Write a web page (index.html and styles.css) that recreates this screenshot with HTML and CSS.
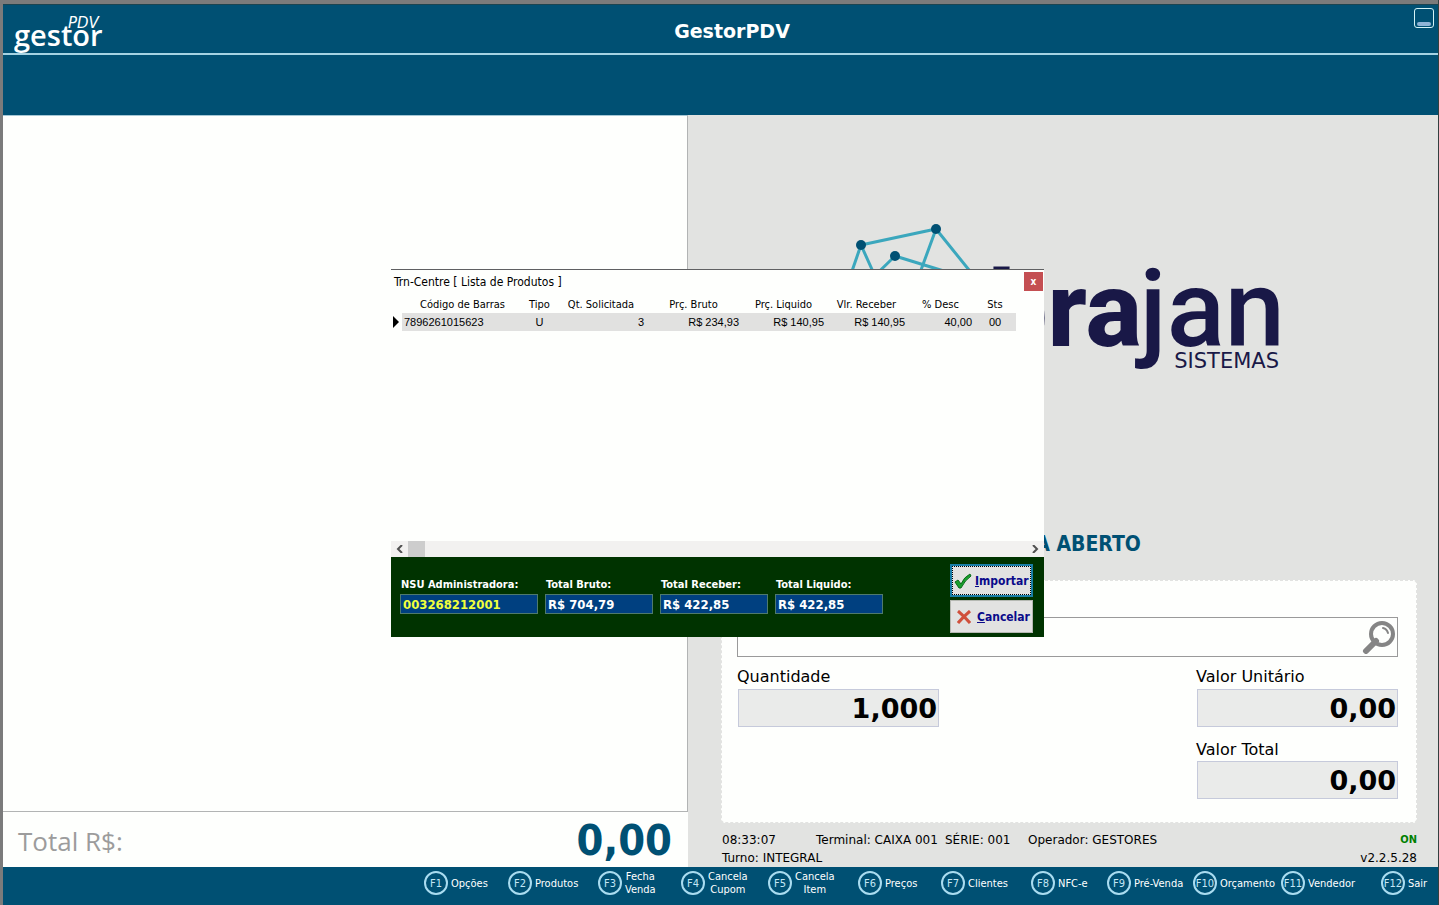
FILE: index.html
```html
<!doctype html>
<html lang="pt-br">
  <head>
    <meta charset="utf-8">
    <title>GestorPDV</title>
    <link rel="stylesheet" href="styles.css">
  </head>
  <body>
    <div class="app">
      <header class="topbar">
        <svg class="brand" width="96" height="46" viewBox="0 0 96 46">
          <text class="brand-name" x="0" y="39">gestor</text>
          <text class="brand-pdv" x="54" y="21">PDV</text>
        </svg>
        <h1>GestorPDV</h1>
        <button class="minimize" type="button" aria-label="Minimizar"></button>
      </header>
      <div class="band"></div>

      <main>
        <section class="sale">
          <div class="items"></div>
          <div class="total">
            <span>Total R$:</span>
            <strong>0,00</strong>
          </div>
        </section>

        <section class="side">
          <div class="company">
            <svg width="448" height="206" viewBox="845 220 448 206">
              <g class="net-lines">
                <path d="M861 245L936 229L994 301M861 245L842 300M861 245L888 305M936 229L910 300M895 256L960 276M895 256L850 300"/>
              </g>
              <g class="net-dots">
                <circle cx="861" cy="245" r="5"/>
                <circle cx="936" cy="229" r="5"/>
                <circle cx="895" cy="256" r="5"/>
              </g>
              <text class="company-bold" x="1142" y="346">bra</text>
              <text class="company-light" x="1285" y="346">jan</text>
              <text class="company-sub" x="1279" y="368">SISTEMAS</text>
            </svg>
          </div>
          <p class="state">CAIXA ABERTO</p>

          <form class="entry">
            <div class="search">
              <input type="text" aria-label="Produto">
              <button type="button" aria-label="Pesquisar">
                <svg width="34" height="34" viewBox="0 0 34 34">
                  <path class="handle" d="M4 31L14 21"/>
                  <circle cx="20" cy="14" r="11"/>
                  <path class="shine" d="M21 8Q25 9 26 13"/>
                </svg>
              </button>
            </div>
            <div class="fields">
              <div class="field">
                <label for="qtd">Quantidade</label>
                <input id="qtd" type="text" value="1,000">
              </div>
              <div class="field">
                <label for="unit">Valor Unitário</label>
                <input id="unit" type="text" value="0,00">
                <label for="vtotal">Valor Total</label>
                <input id="vtotal" type="text" value="0,00">
              </div>
            </div>
          </form>

          <div class="status">
            <div class="status-row">
              <span class="clock">08:33:07</span>
              <span class="terminal">Terminal: CAIXA 001</span>
              <span class="serie">SÉRIE: 001</span>
              <span>Operador: GESTORES</span>
              <b class="online">ON</b>
            </div>
            <div class="status-row">
              <span>Turno: INTEGRAL</span>
              <span class="version">v2.2.5.28</span>
            </div>
          </div>
        </section>
      </main>

      <nav class="keys">
        <button type="button"><i>F1</i><span>Opções</span></button>
        <button type="button"><i>F2</i><span>Produtos</span></button>
        <button type="button"><i>F3</i><span>Fecha<br>Venda</span></button>
        <button type="button"><i>F4</i><span>Cancela<br>Cupom</span></button>
        <button type="button"><i>F5</i><span>Cancela<br>Item</span></button>
        <button type="button"><i>F6</i><span>Preços</span></button>
        <button type="button"><i>F7</i><span>Clientes</span></button>
        <button type="button"><i>F8</i><span>NFC-e</span></button>
        <button type="button"><i>F9</i><span>Pré-Venda</span></button>
        <button type="button"><i>F10</i><span>Orçamento</span></button>
        <button type="button"><i>F11</i><span>Vendedor</span></button>
        <button type="button"><i>F12</i><span>Sair</span></button>
      </nav>
    </div>

    <div class="overlay">
      <div class="dialog" role="dialog" aria-labelledby="dialog-title">
        <div class="dialog-bar">
          <h2 id="dialog-title">Trn-Centre [ Lista de Produtos ]</h2>
          <button class="close" type="button">x</button>
        </div>

        <div class="grid">
          <table>
            <colgroup>
              <col class="c-mark"><col class="c-code"><col class="c-type"><col class="c-qty"><col class="c-gross"><col class="c-net"><col class="c-due"><col class="c-disc"><col class="c-sts">
            </colgroup>
            <thead>
              <tr>
                <th></th>
                <th>Código de Barras</th>
                <th>Tipo</th>
                <th>Qt. Solicitada</th>
                <th>Prç. Bruto</th>
                <th>Prç. Liquido</th>
                <th>Vlr. Receber</th>
                <th>% Desc</th>
                <th>Sts</th>
              </tr>
            </thead>
            <tbody>
              <tr>
                <td class="mark"><svg width="6" height="12" viewBox="0 0 6 12"><path d="M0 0L6 6L0 12Z"/></svg></td>
                <td>7896261015623</td>
                <td class="mid">U</td>
                <td class="num">3</td>
                <td class="num">R$ 234,93</td>
                <td class="num">R$ 140,95</td>
                <td class="num">R$ 140,95</td>
                <td class="num">40,00</td>
                <td class="mid">00</td>
              </tr>
            </tbody>
          </table>
        </div>

        <div class="scroll">
          <button type="button" aria-label="Rolar para a esquerda"><svg width="7" height="8" viewBox="0 0 7 8"><path d="M6 0L2 4L6 8"/></svg></button>
          <div class="thumb"></div>
          <button class="scroll-end" type="button" aria-label="Rolar para a direita"><svg width="7" height="8" viewBox="0 0 7 8"><path d="M1 0L5 4L1 8"/></svg></button>
        </div>

        <div class="summary">
          <div class="sum nsu">
            <label for="nsu">NSU Administradora:</label>
            <input id="nsu" type="text" value="003268212001">
          </div>
          <div class="sum">
            <label for="bruto">Total Bruto:</label>
            <input id="bruto" type="text" value="R$ 704,79">
          </div>
          <div class="sum">
            <label for="receber">Total Receber:</label>
            <input id="receber" type="text" value="R$ 422,85">
          </div>
          <div class="sum">
            <label for="liquido">Total Liquido:</label>
            <input id="liquido" type="text" value="R$ 422,85">
          </div>
          <div class="actions">
            <button class="import" type="button">
              <svg width="18" height="16" viewBox="0 0 18 16"><path class="check" d="M1 9L4 7L7 11Q10 4 16 1L17 3Q11 7 7 15L5 15Z"/></svg>
              <span><u>I</u>mportar</span>
            </button>
            <button class="cancel" type="button">
              <svg width="14" height="14" viewBox="0 0 14 14"><path class="cross" d="M1 1Q7 6 13 13M13 1Q6 7 1 13"/></svg>
              <span><u>C</u>ancelar</span>
            </button>
          </div>
        </div>
      </div>
    </div>
  </body>
</html>
```
FILE: styles.css
```css
* { margin: 0; padding: 0; box-sizing: border-box; }

body {
  background: #7b7b7b;
  color: #000;
  font: 11px/14px "DejaVu Sans Condensed", "DejaVu Sans", sans-serif;
}

button, input { font: inherit; color: inherit; border: 0; border-radius: 0; }
button { background: none; }

.app {
  display: flex;
  flex-direction: column;
  min-height: 100vh;
  padding: 4px 0 0 3px;
  border-right: 1px solid #33403f;
}

/* Top */
.topbar {
  display: grid;
  grid-template-columns: 1fr auto 1fr;
  align-items: center;
  height: 51px;
  padding: 0 4px 0 11px;
  background: #005073;
  border-top: 1px solid #1c4450;
  border-bottom: 2px solid #a5d3e3;
  color: #fff;
}

.topbar h1 { font: bold 19px/24px "DejaVu Sans", sans-serif; margin: 4px 0 0 16px; }

.brand { align-self: end; fill: #fff; }
.brand-name { font: 600 29px "Open Sans", sans-serif; }
.brand-pdv { font: italic 15px "DejaVu Sans", sans-serif; }

.minimize {
  justify-self: end;
  align-self: start;
  width: 20px;
  height: 20px;
  margin-top: 3px;
  padding: 12px 2px 0;
  border: 1px solid #d5f3f6;
  border-radius: 3px;
}
.minimize::before {
  content: "";
  display: block;
  height: 4px;
  border-radius: 2px;
  background: #8fb4d6;
}

.band { height: 60px; background: #005073; }

/* Main area */
main {
  flex: 1;
  display: grid;
  grid-template-columns: 685fr 750fr;
}

.sale { display: flex; flex-direction: column; background: #fefffd; }
.items { flex: 1; border: 1px solid #b2b4b4; border-left: 0; border-top-color: #a5c8d6; }

.total {
  display: flex;
  align-items: center;
  justify-content: space-between;
  height: 55px;
  padding: 0 16px 0 15px;
}
.total span { font: 26px/40px "Open Sans", sans-serif; color: #9c9c9c; padding-top: 2px; }
.total strong { font: bold 43px/48px "DejaVu Sans Condensed", sans-serif; color: #005073; }

.side {
  display: flex;
  flex-direction: column;
  padding: 0 21px 0 33px;
  background: #e2e3e1;
}

.company { flex: 1; display: flex; align-items: center; justify-content: center; }
.net-lines { fill: none; stroke: #3ba7bd; stroke-width: 3; }
.net-dots { fill: #005073; }
.company-bold, .company-light { font: 800 108px Roboto, sans-serif; fill: #191847; text-anchor: end; }
.company-bold { font-size: 106px; }
.company-light { font-weight: 500; }
.company-sub { font: 21px "DejaVu Sans", sans-serif; fill: #191847; text-anchor: end; }

.state {
  margin: 0 12px 24px 0;
  padding-top: 1px;
  font: bold 21px/24px "DejaVu Sans Condensed", sans-serif;
  color: #005073;
  text-align: center;
}

.entry {
  height: 243px;
  padding: 36px 18px 0 15px;
  background: #fefffd;
  border: 1px dashed #e2e3e1;
  border-radius: 4px;
}

.search {
  display: flex;
  align-items: center;
  height: 40px;
  padding-right: 1px;
  border: 1px solid #9a9a9a;
}
.search input { flex: 1; height: 100%; padding: 0 8px; background: none; font-size: 20px; }
.search button { height: 34px; }
.search svg { display: block; fill: none; stroke: #858585; stroke-width: 4; stroke-linecap: round; }
.search .handle { stroke-width: 6; }
.search .shine { stroke-width: 2; }

.fields { display: flex; justify-content: space-between; }
.field { display: flex; flex-direction: column; width: 201px; }
.field:first-child { margin-left: 1px; }
.field label {
  margin: 9px 0 1px -1px;
  font: 16px/22px "DejaVu Sans", sans-serif;
}
.field input {
  height: 38px;
  padding: 0 1px;
  background: #eaebea;
  border: 1px solid #c6cadb;
  font: bold 27px/36px "DejaVu Sans", sans-serif;
  text-align: right;
}
.field input + label { margin-top: 12px; margin-bottom: 0; }

.status { padding: 8px 0 0 1px; font: 12px/18px "DejaVu Sans", sans-serif; }
.status-row { display: flex; }
.clock { width: 94px; }
.terminal { width: 129px; }
.serie { width: 83px; }
.online { margin-left: auto; color: #008000; font-family: "DejaVu Sans Condensed", sans-serif; font-size: 11px; }
.version { margin-left: auto; }

/* Function keys */
.keys {
  display: grid;
  grid-template-columns: 84px 90px 83px 87px 90px 83px 90px 76px 86px 88px 100px 57px;
  justify-content: end;
  height: 38px;
  padding-bottom: 6px;
  background: #005073;
  color: #fff;
}
.keys button { display: flex; align-items: center; gap: 3px; line-height: 13px; white-space: nowrap; }
.keys i {
  flex: none;
  display: flex;
  align-items: center;
  justify-content: center;
  width: 24px;
  height: 24px;
  border: 2px solid #a9dcf0;
  border-radius: 50%;
  color: #c3e6f5;
  font-style: normal;
}

/* Product list dialog */
.overlay {
  position: fixed;
  inset: 1px 4px 0 0;
  display: flex;
  align-items: center;
  justify-content: center;
}

.dialog {
  display: flex;
  flex-direction: column;
  width: 653px;
  height: 368px;
  background: #fefffd;
  border-top: 1px solid #5f6062;
}

.dialog-bar {
  display: flex;
  justify-content: space-between;
  height: 25px;
  padding: 2px 1px 0 3px;
}
.dialog-bar h2 { font-size: 12px; font-weight: normal; line-height: 20px; }
.close { width: 19px; height: 19px; background: #c44f52; color: #fff; font-weight: bold; font-size: 10px; }

.grid { flex: 1; }
.grid table { width: 625px; border-collapse: collapse; table-layout: fixed; }
.grid th { height: 18px; padding-top: 1px; font-weight: normal; white-space: nowrap; }
.grid td { height: 18px; padding: 0 2px; background: #e1e1e0; font-family: "Liberation Sans", Arial, sans-serif; white-space: nowrap; }
.grid .mark { background: none; }
.grid .mark svg { display: block; }
.grid .mid { text-align: center; }
.grid .num { text-align: right; }
.c-mark { width: 11px; }
.c-code { width: 121px; }
.c-type { width: 33px; }
.c-qty { width: 90px; }
.c-gross { width: 95px; }
.c-net { width: 85px; }
.c-due { width: 81px; }
.c-disc { width: 67px; }
.c-sts { width: 42px; }

.scroll { display: flex; height: 16px; background: #f2f1f0; }
.scroll button { width: 17px; display: flex; align-items: center; justify-content: center; }
.scroll svg { fill: none; stroke: #505050; stroke-width: 2; }
.scroll-end { margin-left: auto; }
.thumb { width: 17px; background: #cdcdcd; }

.summary {
  display: flex;
  gap: 7px;
  height: 80px;
  padding: 7px 11px 0 9px;
  background: #003300;
}
.sum { width: 108px; padding-top: 14px; color: #fff; font-weight: bold; }
.sum.nsu { width: 138px; }
.sum label { display: block; line-height: 14px; padding-left: 1px; margin-bottom: 2px; white-space: nowrap; }
.sum input {
  display: block;
  width: 100%;
  height: 20px;
  padding: 0 2px;
  background: #004080;
  border: 1px solid #4f7a6c;
  font-size: 13px;
}
.sum.nsu input { color: #f0ff3c; }

.actions { display: flex; flex-direction: column; gap: 3px; margin-left: auto; }
.actions button {
  display: flex;
  align-items: center;
  gap: 6px;
  width: 83px;
  height: 33px;
  padding-left: 6px;
  background: #e2e2e1;
  border: 1px solid #b5b8b2;
  color: #0a0a8a;
  font-size: 12px;
  font-weight: bold;
}
.actions svg { flex: none; }
.actions .import { gap: 3px; padding-left: 2px; border: 2px solid #1a7fa8; outline: 1px dotted #000; outline-offset: -3px; }
.check { fill: #17a02c; stroke: #0b6a1a; stroke-width: 1; }
.cross { fill: none; stroke: #d0503c; stroke-width: 3; }
```
